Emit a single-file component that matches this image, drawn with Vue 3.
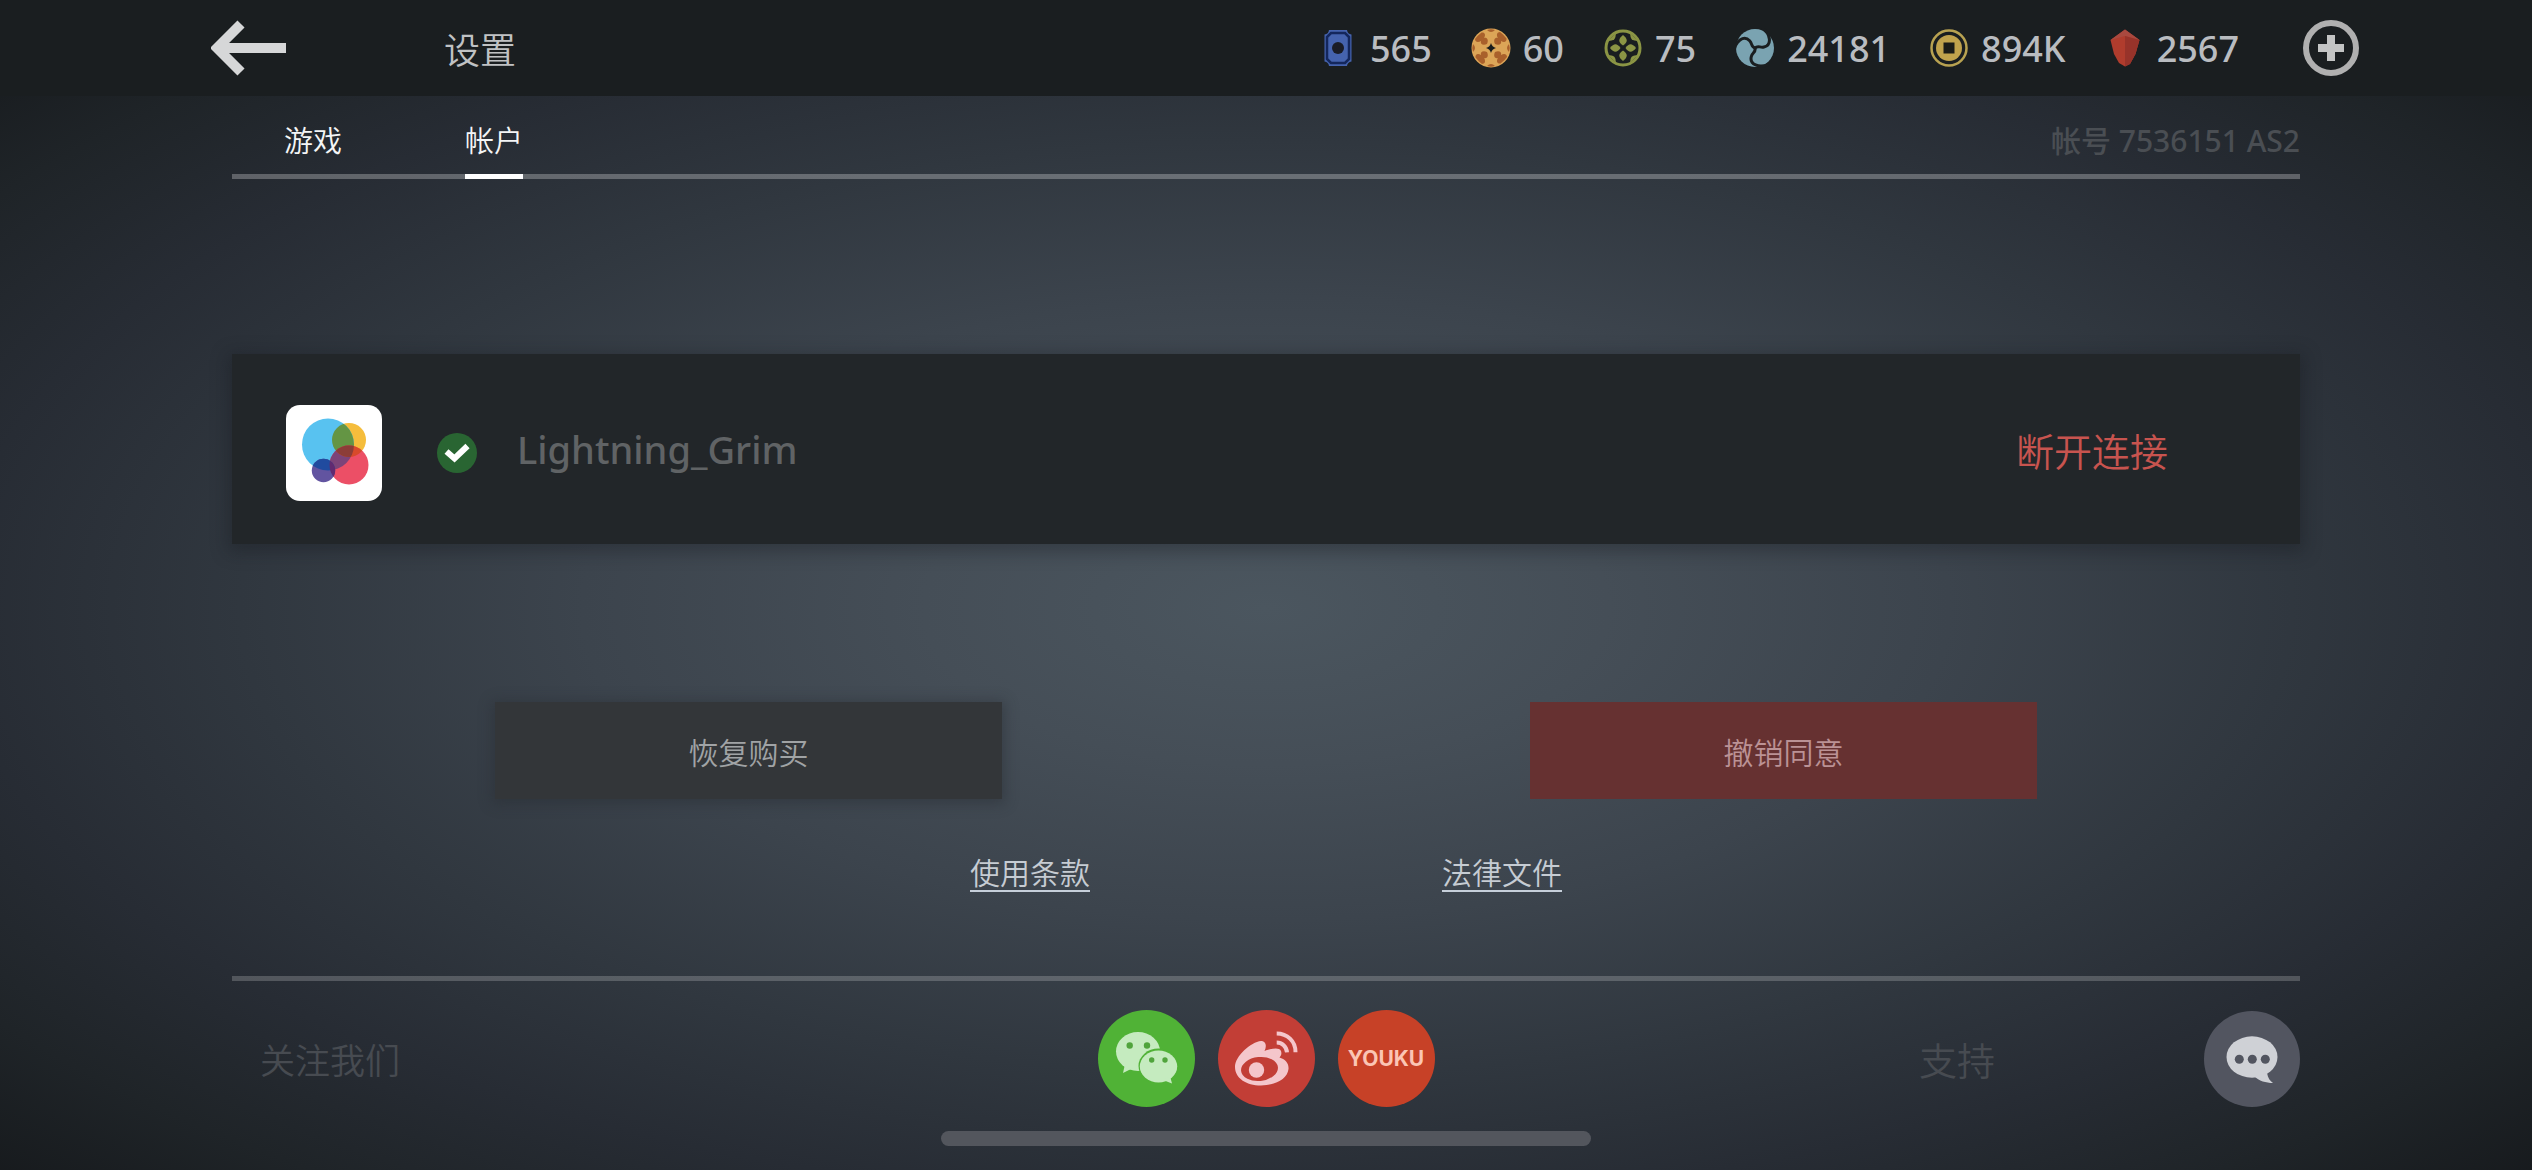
<script setup>
import { ref } from 'vue'

const tabs = [
    { id: 'game', label: '游戏' },
    { id: 'account', label: '帐户' }
]
const activeTab = ref('account')

const currencies = [
    { id: 'token', amount: '565' },
    { id: 'raid', amount: '60' },
    { id: 'leaf', amount: '75' },
    { id: 'orb', amount: '24181' },
    { id: 'coin', amount: '894K' },
    { id: 'gem', amount: '2567' }
]

const quarters = [0, 90, 180, 270]
const thirds = [0, 120, 240]
</script>

<template>
    <div class="page">
        <header class="topbar">
            <button class="icon-button" aria-label="返回">
                <svg class="back" viewBox="0 0 76 56">
                    <path d="M30 4 L6 28 L30 52 M8 28 H75" fill="none" stroke="#d6d7d8" stroke-width="10" />
                </svg>
            </button>
            <h1 class="title">设置</h1>
            <ul class="currencies">
                <li v-for="item in currencies" :key="item.id" class="currency">
                    <svg class="currency-icon" viewBox="-20 -20 40 40" aria-hidden="true">
                        <g v-if="item.id === 'token'">
                            <path d="M-9 -18 H9 Q9.500 -14 13.500 -13.500 V13.500 Q9.500 14 9 18 H-9 Q-9.500 14 -13.500 13.500 V-13.500 Q-9.500 -14 -9 -18 Z" fill="#4563ae" />
                            <path d="M-7 -15 H7 L11 -11 V11 L7 15 H-7 L-11 11 V-11 Z" fill="#4563ae" stroke="#14275c" stroke-width="2.500" />
                            <circle r="6" fill="#1a1c26" />
                        </g>
                        <g v-else-if="item.id === 'raid'">
                            <circle r="19.500" fill="#dca557" />
                            <g v-for="a in quarters" :key="a" :transform="`rotate(${a})`" fill="#a9602b">
                                <path d="M4 -4 C2 -8 4 -11 7 -10 C5 -13 6 -16 9 -16 L12 -13.500 L15.500 -9.500 C16 -6 13 -5 10 -7 C11 -4 8 -2 4 -4 Z" />
                                <path d="M-4 -18 Q0 -14 4 -18 Q0 -19.500 -4 -18 Z" />
                            </g>
                            <path d="M0 -5 Q1 -1 5 0 Q1 1 0 5 Q-1 1 -5 0 Q-1 -1 0 -5 Z" fill="#1a1c1c" />
                        </g>
                        <g v-else-if="item.id === 'leaf'" fill="#8b9544">
                            <circle r="17" fill="none" stroke="#8b9544" stroke-width="3" />
                            <g v-for="a in quarters" :key="a" :transform="`rotate(${a})`">
                                <path d="M0 -13 C5 -9 5 -6 0 -2.500 C-5 -6 -5 -9 0 -13 Z" />
                                <path d="M7 -15 L15 -7 L11.500 -7.500 Q8 -8 7.500 -11.500 Z" />
                            </g>
                        </g>
                        <g v-else-if="item.id === 'orb'">
                            <circle r="19" fill="#7aa3b1" />
                            <g v-for="a in thirds" :key="a" :transform="`rotate(${a})`">
                                <path d="M7 -20 C16 -14 17 -3 9 -1 C5 0 3 -3 0 0" fill="none" stroke="#1a1e20" stroke-width="3" />
                            </g>
                        </g>
                        <g v-else-if="item.id === 'coin'">
                            <circle r="17.500" fill="none" stroke="#b8a251" stroke-width="2.500" />
                            <circle r="13" fill="#c0a24c" />
                            <rect x="-5.500" y="-5.500" width="11" height="11" fill="#1a1b17" />
                        </g>
                        <g v-else>
                            <path d="M0 -18.500 L14.500 -8 L10.500 6 L5 16 L0 18.500 L-6 15 L-11 6 L-14.500 -8 Z" fill="#b03c2d" />
                            <path d="M0 -18.500 L14.500 -8 L0 -12 L-14.500 -8 Z" fill="#a9493f" />
                            <path d="M0 -12 L14.500 -8 L10.500 6 L5 16 L0 18.500 Z" fill="#97332a" />
                        </g>
                    </svg>
                    <span class="amount">{{ item.amount }}</span>
                </li>
            </ul>
            <button class="icon-button" aria-label="添加">
                <svg class="add" viewBox="0 0 56 56">
                    <circle cx="28" cy="28" r="25" fill="none" stroke="#b0b0b0" stroke-width="6" />
                    <path d="M28 15 V41 M15 28 H41" stroke="#c3c4c4" stroke-width="8" />
                </svg>
            </button>
        </header>

        <main class="content">
            <div class="tabbar">
                <nav class="tabs">
                    <button
                        v-for="tab in tabs"
                        :key="tab.id"
                        class="tab"
                        :class="{ active: activeTab === tab.id }"
                        @click="activeTab = tab.id"
                    >{{ tab.label }}</button>
                </nav>
                <span class="account-id">帐号 7536151 AS2</span>
            </div>

            <section class="card">
                <div class="badges">
                    <svg class="game-center" viewBox="0 0 96 96" aria-hidden="true">
                        <rect width="96" height="96" rx="14" fill="#fff" />
                        <circle cx="63" cy="35" r="17" fill="#f5bd3c" />
                        <circle cx="42" cy="39.500" r="26" fill="#58c2f0" />
                        <circle cx="63" cy="60" r="19.500" fill="#ec4f66" />
                        <circle cx="37.500" cy="65.500" r="11.700" fill="#6254a0" />
                        <!-- overlaps between the bubbles -->
                        <clipPath id="blue"><circle cx="42" cy="39.500" r="26" /></clipPath>
                        <clipPath id="red"><circle cx="63" cy="60" r="19.500" /></clipPath>
                        <g clip-path="url(#blue)">
                            <circle cx="63" cy="35" r="17" fill="#649544" />
                            <circle cx="63" cy="60" r="19.500" fill="#7c4479" />
                            <circle cx="37.500" cy="65.500" r="11.700" fill="#204b9f" />
                        </g>
                        <g clip-path="url(#red)">
                            <circle cx="63" cy="35" r="17" fill="#d84a2b" />
                            <circle cx="37.500" cy="65.500" r="11.700" fill="#612a70" />
                            <g clip-path="url(#blue)">
                                <circle cx="63" cy="35" r="17" fill="#8c3d38" />
                            </g>
                        </g>
                    </svg>
                    <svg class="check" viewBox="0 0 40 40" aria-hidden="true">
                        <circle cx="20" cy="20" r="20" fill="#296532" />
                        <path d="M9.500 18.500 L17.500 25.500 L30.500 13" fill="none" stroke="#fff" stroke-width="6" />
                    </svg>
                </div>
                <span class="player">Lightning_Grim</span>
                <button class="disconnect">断开连接</button>
            </section>

            <div class="actions">
                <button class="action restore">恢复购买</button>
                <button class="action revoke">撤销同意</button>
            </div>

            <div class="links">
                <a href="#terms">使用条款</a>
                <a href="#legal">法律文件</a>
            </div>
        </main>

        <footer class="footer">
            <span class="follow">关注我们</span>
            <div class="socials">
                <a href="#wechat" class="social wechat" aria-label="WeChat">
                    <svg viewBox="0 0 97 97">
                        <g fill="#c5ebbf">
                            <ellipse cx="40" cy="41.500" rx="22" ry="19.500" />
                            <path d="M27 54 L25 63 L35 58 Z" />
                        </g>
                        <ellipse cx="60.500" cy="56" rx="20" ry="17.500" fill="#50b236" />
                        <g fill="#c5ebbf">
                            <ellipse cx="60.500" cy="56.500" rx="18.700" ry="16" />
                            <path d="M65 70 L74 73.500 L72 66 Z" />
                        </g>
                        <g fill="#50a43c">
                            <circle cx="31.700" cy="35.500" r="3.200" />
                            <circle cx="49" cy="35.500" r="3.200" />
                            <circle cx="53.700" cy="50" r="2.700" />
                            <circle cx="67" cy="50" r="2.700" />
                        </g>
                    </svg>
                </a>
                <a href="#weibo" class="social weibo" aria-label="Weibo">
                    <svg viewBox="0 0 97 97">
                        <path d="M17 57 C17 46 33 32 43 31 C48 31 49 36 46.500 41 C52 39 61 36.500 63 41 C64 44 63 46 61.500 47.500 C67 49 71 53 70.500 59 C69.500 69 57 75.500 43 75.500 C28 75.500 17 68 17 57 Z" fill="#f4c6cb" />
                        <ellipse cx="41.500" cy="59" rx="18.500" ry="12" transform="rotate(-6 41.500 59)" fill="#c23e36" />
                        <circle cx="38.500" cy="60" r="7.700" fill="#f4c6cb" />
                        <g fill="none" stroke="#f4c6cb" stroke-width="4">
                            <path d="M58.700 23.500 C69 23.500 77.700 31 77.500 42.300" />
                            <path d="M58.700 32.500 C64 32.500 68.500 36.500 69 42.300" />
                        </g>
                    </svg>
                </a>
                <a href="#youku" class="social youku">YOUKU</a>
            </div>
            <div class="support">
                <span>支持</span>
                <button class="chat" aria-label="支持">
                    <svg viewBox="0 0 96 96">
                        <ellipse cx="48" cy="46" rx="25.500" ry="20.700" fill="#cfd1d6" />
                        <path d="M50 65 C55 70 62 72 69 72 C66 70 64 67 63 62 Z" fill="#cfd1d6" />
                        <g fill="#525560">
                            <circle cx="35.300" cy="48.300" r="4.500" />
                            <circle cx="48.300" cy="48.300" r="4.500" />
                            <circle cx="61.300" cy="48.300" r="4.500" />
                        </g>
                    </svg>
                </button>
            </div>
        </footer>
        <div class="home-indicator"></div>
    </div>
</template>

<style>
body {
    margin: 0;
    background-color: #14171a;
}
</style>

<style scoped>
.page {
    display: flex;
    flex-direction: column;
    box-sizing: border-box;
    min-height: 100vh;
    padding-bottom: 24px;
    font-family: "Noto Sans", "Noto Sans CJK SC", sans-serif;
    font-weight: 350;
    background: radial-gradient(ellipse 75% 74% at 50% 52%, #4b565f 0%, #454e57 18%, #3c444d 36%, #30373f 54%, #272c34 69%, #1f2428 82%, #16191c 95%, #121517 100%);
}

button {
    padding: 0;
    border: none;
    background: none;
    color: inherit;
    font: inherit;
    cursor: pointer;
}

svg {
    display: block;
}

.topbar {
    display: flex;
    align-items: center;
    height: 96px;
    padding: 0 173px 0 211px;
    background-color: #1a1e20;
}

.back {
    width: 76px;
    height: 56px;
}

.title {
    margin: 0 0 0 157px;
    color: #c0c2c4;
    font-size: 36px;
    font-weight: 350;
}

.currencies {
    display: flex;
    gap: 39px;
    margin: 0 64px 0 auto;
    padding: 0;
    list-style: none;
}

.currency {
    display: flex;
    align-items: center;
    gap: 12px;
    color: #b9bcc0;
    font-size: 36px;
    font-weight: 500;
    line-height: 48px;
}

.amount {
    padding-top: 2px;
}

.currency-icon {
    width: 40px;
    height: 40px;
}

.add {
    width: 56px;
    height: 56px;
}

.content {
    flex: 1;
    padding: 0 232px;
}

.tabbar {
    display: flex;
    justify-content: space-between;
    height: 78px;
    border-bottom: 5px solid rgba(255, 255, 255, 0.27);
    font-size: 29px;
    line-height: 90px;
}

.tabs {
    display: flex;
    gap: 123px;
    padding-left: 52px;
}

.tab {
    height: 83px;
    border-bottom: 5px solid transparent;
    color: #f4f5f6;
    line-height: 90px;
}

.tab.active {
    border-bottom-color: #fff;
}

.account-id {
    color: #4a4e53;
    font-size: 30px;
    font-weight: 500;
}

.card {
    display: flex;
    align-items: center;
    height: 190px;
    margin-top: 175px;
    padding: 0 132px 0 54px;
    background-color: #222629;
    box-shadow: 0 4px 16px 4px rgba(20, 24, 28, 0.35);
    font-size: 38px;
}

.badges {
    display: flex;
    align-items: center;
    gap: 55px;
    padding-top: 8px;
}

.game-center {
    width: 96px;
    height: 96px;
}

.check {
    width: 40px;
    height: 40px;
}

.player {
    margin-left: 40px;
    color: #606365;
    font-weight: 500;
}

.disconnect {
    margin-left: auto;
    color: #c8544f;
}

.actions {
    display: flex;
    justify-content: space-between;
    margin-top: 158px;
    padding: 0 263px;
    font-size: 30px;
}

.action {
    width: 507px;
    height: 97px;
}

.restore {
    background-color: #333639;
    box-shadow: 0 2px 12px 3px rgba(40, 44, 50, 0.45);
    color: #a0a3a5;
}

.revoke {
    background-color: #663131;
    color: #bb9295;
}

.links {
    display: flex;
    justify-content: center;
    gap: 352px;
    margin-top: 57px;
    font-size: 30px;
    line-height: 34px;
}

.links a {
    border-bottom: 2px solid #c6cfda;
    color: #c6ccd3;
    text-decoration: none;
}

.footer {
    display: grid;
    grid-template-columns: 1fr auto 1fr;
    align-items: center;
    margin: 0 232px;
    padding-top: 29px;
    border-top: 5px solid rgba(255, 255, 255, 0.2);
    color: #474b51;
}

.follow {
    padding-left: 28px;
    font-size: 35px;
}

.socials {
    display: flex;
    gap: 23px;
}

.social {
    display: flex;
    align-items: center;
    justify-content: center;
    width: 97px;
    height: 97px;
    border-radius: 50%;
}

.wechat {
    background-color: #50b236;
}

.weibo {
    background-color: #c23e36;
}

.youku {
    background-color: #c74127;
    color: #fbc5b4;
    font-family: Inter, sans-serif;
    font-size: 21px;
    font-weight: 700;
    text-decoration: none;
}

.support {
    display: flex;
    align-items: center;
    justify-content: flex-end;
    gap: 209px;
    font-size: 38px;
}

.chat {
    width: 96px;
    height: 96px;
    border-radius: 50%;
    background-color: #525560;
}

.home-indicator {
    width: 650px;
    height: 15px;
    margin: 24px auto 0;
    border-radius: 8px;
    background-color: #53565d;
}
</style>
